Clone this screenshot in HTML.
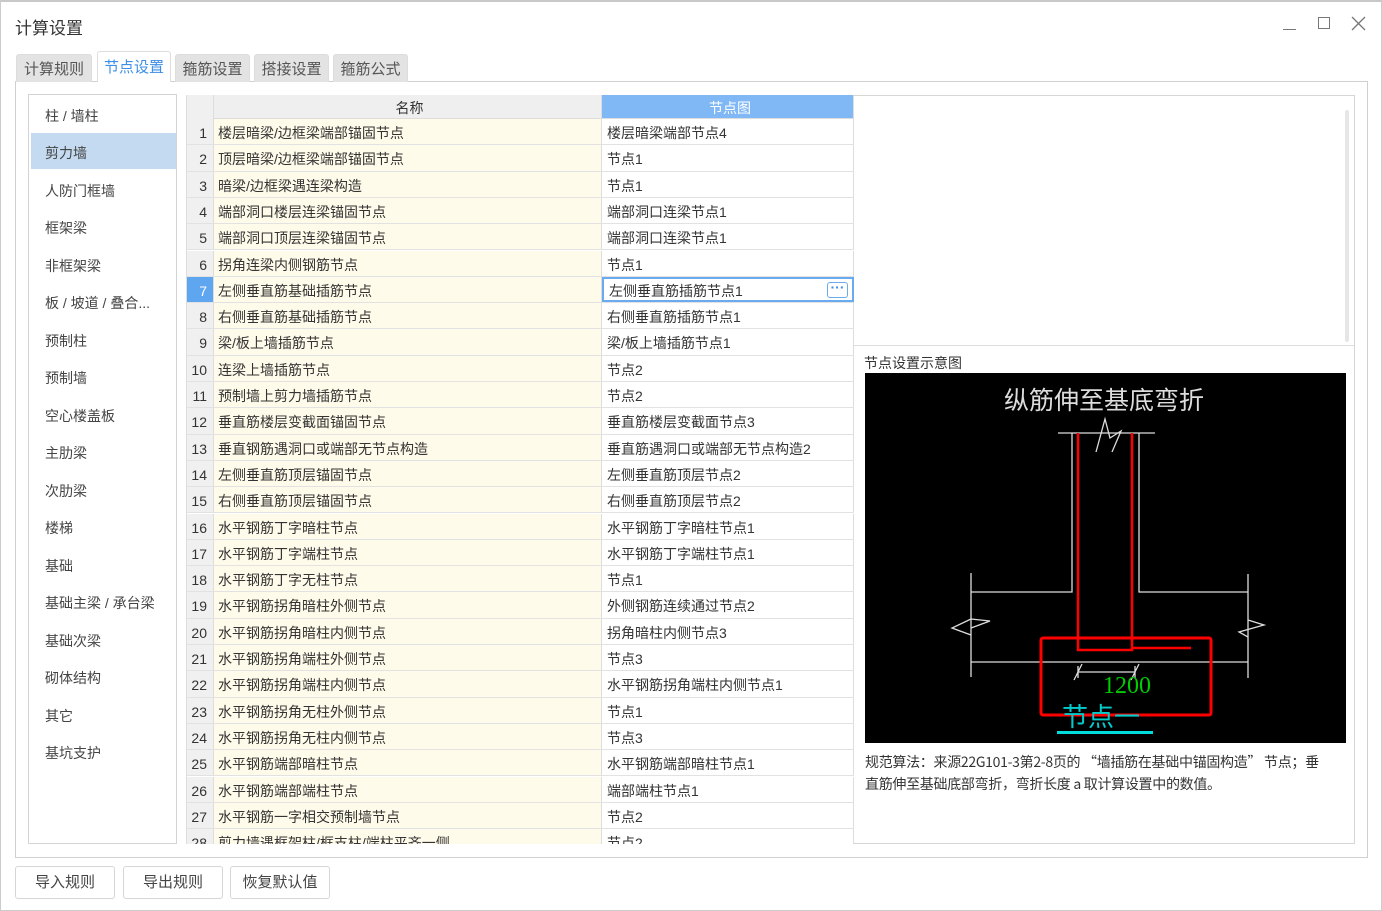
<!DOCTYPE html>
<html><head><meta charset="utf-8"><style>
*{margin:0;padding:0;box-sizing:border-box}
body{width:1382px;height:911px;background:#fff;font-family:"Liberation Sans","Noto Sans CJK SC",sans-serif;font-size:14px;color:#333;position:relative;overflow:hidden}
.a{position:absolute}
.win{left:0;top:0;width:1382px;height:911px;border:1px solid #ccc;border-top:2px solid #c8c8c8}
.tab{top:54px;height:28px;background:#e3e3e3;border:1px solid #ddd;border-bottom:none;border-radius:3px 3px 0 0;text-align:center;line-height:28px;font-size:15px;color:#555}
.panel{left:15px;top:81px;width:1353px;height:777px;border:1px solid #d0d0d0}
.list{left:28px;top:94px;width:149px;height:750px;border:1px solid #d4d4d4}
.li{position:absolute;left:16px;font-size:14px;color:#444}
.grid{left:186px;top:95px;width:668px;height:749px;overflow:hidden;border-left:1px solid #ddd}
.row{position:absolute;left:0;height:26.3px;width:668px;border-bottom:1px solid #e2e2e2}
.n{position:absolute;left:0;width:27px;height:100%;background:#f0f0f0;text-align:right;padding-right:6px;line-height:28px;border-right:1px solid #ddd;font-size:14px}
.c1{position:absolute;left:27px;width:388px;height:100%;background:#fffbea;padding-left:4px;line-height:28px;border-right:1px solid #ddd;white-space:nowrap;overflow:hidden}
.c2{position:absolute;left:415px;width:252px;height:100%;padding-left:5px;line-height:28px;border-right:1px solid #ddd;white-space:nowrap}
.btn{top:866px;height:33px;border:1px solid #d6d6d6;border-radius:3px;text-align:center;line-height:31px;font-size:15px;color:#444;background:#fff}
</style></head><body>
<div class="a win"></div>
<div class="a" style="left:15px;top:14px;font-size:17px;color:#333">计算设置</div>
<div class="a" style="left:1283px;top:29px;width:13px;height:1px;background:#777"></div>
<div class="a" style="left:1318px;top:17px;width:12px;height:12px;border:1px solid #777"></div>
<svg class="a" style="left:1351px;top:16px" width="15" height="15"><path d="M1 1L14 14M14 1L1 14" stroke="#777" stroke-width="1.3"/></svg>
<div class="a panel"></div>
<div class="a tab" style="left:16px;width:76px;line-height:30px">计算规则</div>
<div class="a tab" style="left:97px;width:74px;top:51px;height:31px;background:#fff;color:#3d8ee8;line-height:31px">节点设置</div>
<div class="a tab" style="left:175px;width:75px;line-height:30px">箍筋设置</div>
<div class="a tab" style="left:254px;width:75px;line-height:30px">搭接设置</div>
<div class="a tab" style="left:333px;width:75px;line-height:30px">箍筋公式</div>
<div class="a list">
<div class="a" style="left:2px;top:38px;width:145px;height:36px;background:#c4daf1"></div>
<div class="li" style="top:11px">柱 / 墙柱</div>
<div class="li" style="top:48px">剪力墙</div>
<div class="li" style="top:86px">人防门框墙</div>
<div class="li" style="top:123px">框架梁</div>
<div class="li" style="top:161px">非框架梁</div>
<div class="li" style="top:198px">板 / 坡道 / 叠合...</div>
<div class="li" style="top:236px">预制柱</div>
<div class="li" style="top:273px">预制墙</div>
<div class="li" style="top:311px">空心楼盖板</div>
<div class="li" style="top:348px">主肋梁</div>
<div class="li" style="top:386px">次肋梁</div>
<div class="li" style="top:423px">楼梯</div>
<div class="li" style="top:461px">基础</div>
<div class="li" style="top:498px">基础主梁 / 承台梁</div>
<div class="li" style="top:536px">基础次梁</div>
<div class="li" style="top:573px">砌体结构</div>
<div class="li" style="top:611px">其它</div>
<div class="li" style="top:648px">基坑支护</div>
</div>
<div class="a grid">
<div class="row" style="top:0;height:24px;border-bottom:1px solid #ddd">
<div class="n" style="height:24px"></div>
<div class="c1" style="background:#efefef;text-align:center;line-height:26px">名称</div>
<div class="c2" style="background:#7fb8f5;color:#fff;text-align:center;line-height:26px">节点图</div></div>
<div class="row" style="top:24px"><div class="n">1</div><div class="c1">楼层暗梁/边框梁端部锚固节点</div><div class="c2">楼层暗梁端部节点4</div></div>
<div class="row" style="top:50.3px"><div class="n">2</div><div class="c1">顶层暗梁/边框梁端部锚固节点</div><div class="c2">节点1</div></div>
<div class="row" style="top:76.6px"><div class="n">3</div><div class="c1">暗梁/边框梁遇连梁构造</div><div class="c2">节点1</div></div>
<div class="row" style="top:102.9px"><div class="n">4</div><div class="c1">端部洞口楼层连梁锚固节点</div><div class="c2">端部洞口连梁节点1</div></div>
<div class="row" style="top:129.2px"><div class="n">5</div><div class="c1">端部洞口顶层连梁锚固节点</div><div class="c2">端部洞口连梁节点1</div></div>
<div class="row" style="top:155.5px"><div class="n">6</div><div class="c1">拐角连梁内侧钢筋节点</div><div class="c2">节点1</div></div>
<div class="row" style="top:181.8px"><div class="n" style="background:#5ea6f0;color:#fff">7</div><div class="c1">左侧垂直筋基础插筋节点</div><div class="c2" style="border:2px solid #6aaaf0;padding-left:5px;line-height:24px">左侧垂直筋插筋节点1<span style="position:absolute;right:4px;top:3px;width:21px;height:16px;border:1px solid #6aaaf0;border-radius:3px;line-height:8px;text-align:center;color:#3d8ee8;font-weight:bold">···</span></div></div>
<div class="row" style="top:208.1px"><div class="n">8</div><div class="c1">右侧垂直筋基础插筋节点</div><div class="c2">右侧垂直筋插筋节点1</div></div>
<div class="row" style="top:234.4px"><div class="n">9</div><div class="c1">梁/板上墙插筋节点</div><div class="c2">梁/板上墙插筋节点1</div></div>
<div class="row" style="top:260.7px"><div class="n">10</div><div class="c1">连梁上墙插筋节点</div><div class="c2">节点2</div></div>
<div class="row" style="top:287px"><div class="n">11</div><div class="c1">预制墙上剪力墙插筋节点</div><div class="c2">节点2</div></div>
<div class="row" style="top:313.3px"><div class="n">12</div><div class="c1">垂直筋楼层变截面锚固节点</div><div class="c2">垂直筋楼层变截面节点3</div></div>
<div class="row" style="top:339.6px"><div class="n">13</div><div class="c1">垂直钢筋遇洞口或端部无节点构造</div><div class="c2">垂直筋遇洞口或端部无节点构造2</div></div>
<div class="row" style="top:365.9px"><div class="n">14</div><div class="c1">左侧垂直筋顶层锚固节点</div><div class="c2">左侧垂直筋顶层节点2</div></div>
<div class="row" style="top:392.2px"><div class="n">15</div><div class="c1">右侧垂直筋顶层锚固节点</div><div class="c2">右侧垂直筋顶层节点2</div></div>
<div class="row" style="top:418.5px"><div class="n">16</div><div class="c1">水平钢筋丁字暗柱节点</div><div class="c2">水平钢筋丁字暗柱节点1</div></div>
<div class="row" style="top:444.8px"><div class="n">17</div><div class="c1">水平钢筋丁字端柱节点</div><div class="c2">水平钢筋丁字端柱节点1</div></div>
<div class="row" style="top:471.1px"><div class="n">18</div><div class="c1">水平钢筋丁字无柱节点</div><div class="c2">节点1</div></div>
<div class="row" style="top:497.4px"><div class="n">19</div><div class="c1">水平钢筋拐角暗柱外侧节点</div><div class="c2">外侧钢筋连续通过节点2</div></div>
<div class="row" style="top:523.7px"><div class="n">20</div><div class="c1">水平钢筋拐角暗柱内侧节点</div><div class="c2">拐角暗柱内侧节点3</div></div>
<div class="row" style="top:550px"><div class="n">21</div><div class="c1">水平钢筋拐角端柱外侧节点</div><div class="c2">节点3</div></div>
<div class="row" style="top:576.3px"><div class="n">22</div><div class="c1">水平钢筋拐角端柱内侧节点</div><div class="c2">水平钢筋拐角端柱内侧节点1</div></div>
<div class="row" style="top:602.6px"><div class="n">23</div><div class="c1">水平钢筋拐角无柱外侧节点</div><div class="c2">节点1</div></div>
<div class="row" style="top:628.9px"><div class="n">24</div><div class="c1">水平钢筋拐角无柱内侧节点</div><div class="c2">节点3</div></div>
<div class="row" style="top:655.2px"><div class="n">25</div><div class="c1">水平钢筋端部暗柱节点</div><div class="c2">水平钢筋端部暗柱节点1</div></div>
<div class="row" style="top:681.5px"><div class="n">26</div><div class="c1">水平钢筋端部端柱节点</div><div class="c2">端部端柱节点1</div></div>
<div class="row" style="top:707.8px"><div class="n">27</div><div class="c1">水平钢筋一字相交预制墙节点</div><div class="c2">节点2</div></div>
<div class="row" style="top:734.1px"><div class="n">28</div><div class="c1">剪力墙遇框架柱/框支柱/端柱平齐一侧</div><div class="c2">节点2</div></div>
</div>
<div class="a" style="left:853px;top:95px;width:502px;height:749px;border:1px solid #d6d6d6;border-left:none"></div>
<div class="a" style="left:853px;top:345px;width:501px;height:1px;background:#ddd"></div>
<div class="a" style="left:1345px;top:110px;width:4px;height:232px;background:#e6e6e6;border-radius:2px"></div>
<div class="a" style="left:864px;top:353px;font-size:14px;color:#333">节点设置示意图</div>
<svg class="a" style="left:865px;top:373px" width="481" height="370" viewBox="865 373 481 370">
<rect x="865" y="373" width="481" height="370" fill="#000"/>
<text x="1104" y="409" fill="#ddd" font-size="25" text-anchor="middle" font-family="Noto Sans CJK SC,sans-serif">纵筋伸至基底弯折</text>
<g stroke="#ddd" stroke-width="1.3" fill="none">
<path d="M1058 433H1155M1072 433V592H971M1139 433V592H1248M971 573V677M1248 574V678M971 662H1248"/>
<path d="M1096 452L1105 419L1110 438L1121 431L1112 452"/>
<path d="M971 619L952 628L971 635M971 619L990 621L971 628"/>
<path d="M1248 620L1264 625L1239 632L1248 637"/>
<path d="M1078 672H1135M1078 666V678M1135 666V678M1074 680L1082 664M1131 680L1139 664"/>
</g>
<path d="M1078 433V650H1132V433M1132 648H1191" stroke="#f00" stroke-width="2.5" fill="none"/>
<rect x="1041" y="638" width="170" height="77" stroke="#f00" stroke-width="3" fill="none" rx="2"/>
<text x="1103" y="693" fill="#0c0" font-size="24" font-family="Liberation Serif,serif">1200</text>
<text x="1062" y="726" fill="#0cc" font-size="26" font-family="Noto Sans CJK SC,sans-serif">节点一</text>
<rect x="1057" y="731" width="96" height="3" fill="#0dd"/>
</svg>
<div class="a" style="left:865px;top:751px;width:458px;font-size:14px;line-height:22px;color:#333;font-family:'Noto Sans CJK SC',sans-serif;letter-spacing:-0.3px">规范算法：来源22G101-3第2-8页的 “墙插筋在基础中锚固构造” 节点；垂直筋伸至基础底部弯折，弯折长度 a 取计算设置中的数值。</div>
<div class="a btn" style="left:15px;width:100px">导入规则</div>
<div class="a btn" style="left:123px;width:100px">导出规则</div>
<div class="a btn" style="left:230px;width:100px">恢复默认值</div>
</body></html>
